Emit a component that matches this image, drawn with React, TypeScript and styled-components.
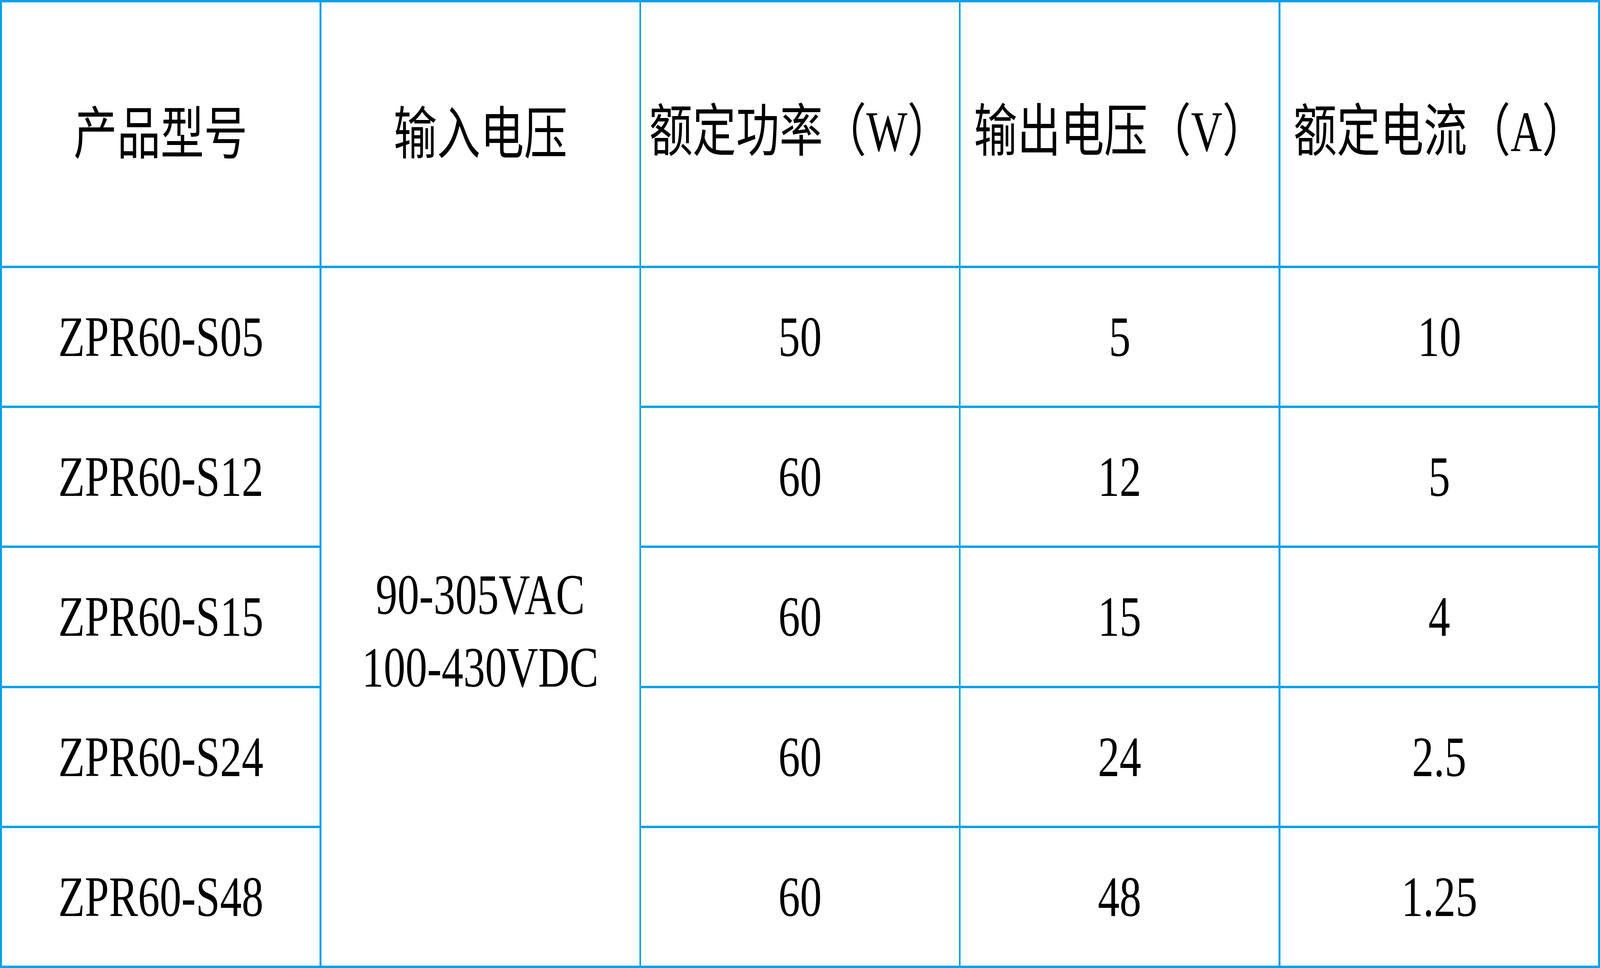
import React, { useEffect, useState } from 'react';
import styled, { createGlobalStyle } from 'styled-components';

const GlobalStyle = createGlobalStyle`
  html, body {
    margin: 0;
    padding: 0;
    background: #fff;
    overflow: hidden;
  }
`;

// the sheet was drawn for a 5378px wide page; text is squeezed to that ratio
const DESIGN_WIDTH = 5378;
const LINE = '#00a0e9';

const Sheet = styled.div`
  display: grid;
  grid-template-columns: repeat(5, minmax(0, 1fr));
  grid-template-rows: 674px repeat(5, minmax(0, 1fr));
  column-gap: 0.115vw;
  row-gap: 6px;
  padding: 6px 0.115vw;
  width: 100vw;
  height: 100vh;
  box-sizing: border-box;
  overflow: hidden;
  background: ${LINE};
  font-family: 'Liberation Serif', 'Noto Sans CJK SC', serif;
  color: #000;
`;

const Cell = styled.div<{ $span?: number }>`
  display: flex;
  align-items: center;
  justify-content: center;
  min-width: 0;
  background: #fff;
  font-size: 146px;
  line-height: 186px;
  white-space: nowrap;
  ${(p) => (p.$span ? `grid-row: span ${p.$span};` : '')}
`;

const HeadCell = styled(Cell)`
  font-family: 'Noto Sans CJK SC', 'Liberation Serif', sans-serif;
  font-weight: 400;
  padding-bottom: 26px;
`;

const Text = styled.span`
  display: inline-block;
  flex: none;
  transform-origin: center;
`;

const Unit = styled.span`
  font-family: 'Liberation Serif', serif;
`;

const Stack = styled.div`
  display: flex;
  flex-direction: column;
  align-items: center;
  padding-top: 72px;
`;

const headers: [string, string?][] = [
  ['产品型号'],
  ['输入电压'],
  ['额定功率', 'W'],
  ['输出电压', 'V'],
  ['额定电流', 'A'],
];

const rows = [
  ['ZPR60-S05', '50', '5', '10'],
  ['ZPR60-S12', '60', '12', '5'],
  ['ZPR60-S15', '60', '15', '4'],
  ['ZPR60-S24', '60', '24', '2.5'],
  ['ZPR60-S48', '60', '48', '1.25'],
];

const useSqueeze = () => {
  const get = () => Math.min(1, window.innerWidth / DESIGN_WIDTH);
  const [sx, setSx] = useState(get);
  useEffect(() => {
    const onResize = () => setSx(get());
    window.addEventListener('resize', onResize);
    return () => window.removeEventListener('resize', onResize);
  }, []);
  return { transform: `scaleX(${sx})` };
};

const App = () => {
  const squeeze = useSqueeze();

  return (
    <>
      <GlobalStyle />
      <Sheet>
        {headers.map(([label, unit]) => (
          <HeadCell key={label}>
            <Text style={squeeze}>
              {label}
              {unit && (
                <>
                  （<Unit>{unit}</Unit>）
                </>
              )}
            </Text>
          </HeadCell>
        ))}
        {rows.map(([model, power, volt, amp], i) => (
          <React.Fragment key={model}>
            <Cell>
              <Text style={squeeze}>{model}</Text>
            </Cell>
            {i === 0 && (
              <Cell $span={5}>
                <Stack>
                  <Text style={squeeze}>90-305VAC</Text>
                  <Text style={squeeze}>100-430VDC</Text>
                </Stack>
              </Cell>
            )}
            <Cell>
              <Text style={squeeze}>{power}</Text>
            </Cell>
            <Cell>
              <Text style={squeeze}>{volt}</Text>
            </Cell>
            <Cell>
              <Text style={squeeze}>{amp}</Text>
            </Cell>
          </React.Fragment>
        ))}
      </Sheet>
    </>
  );
};

export default App;
